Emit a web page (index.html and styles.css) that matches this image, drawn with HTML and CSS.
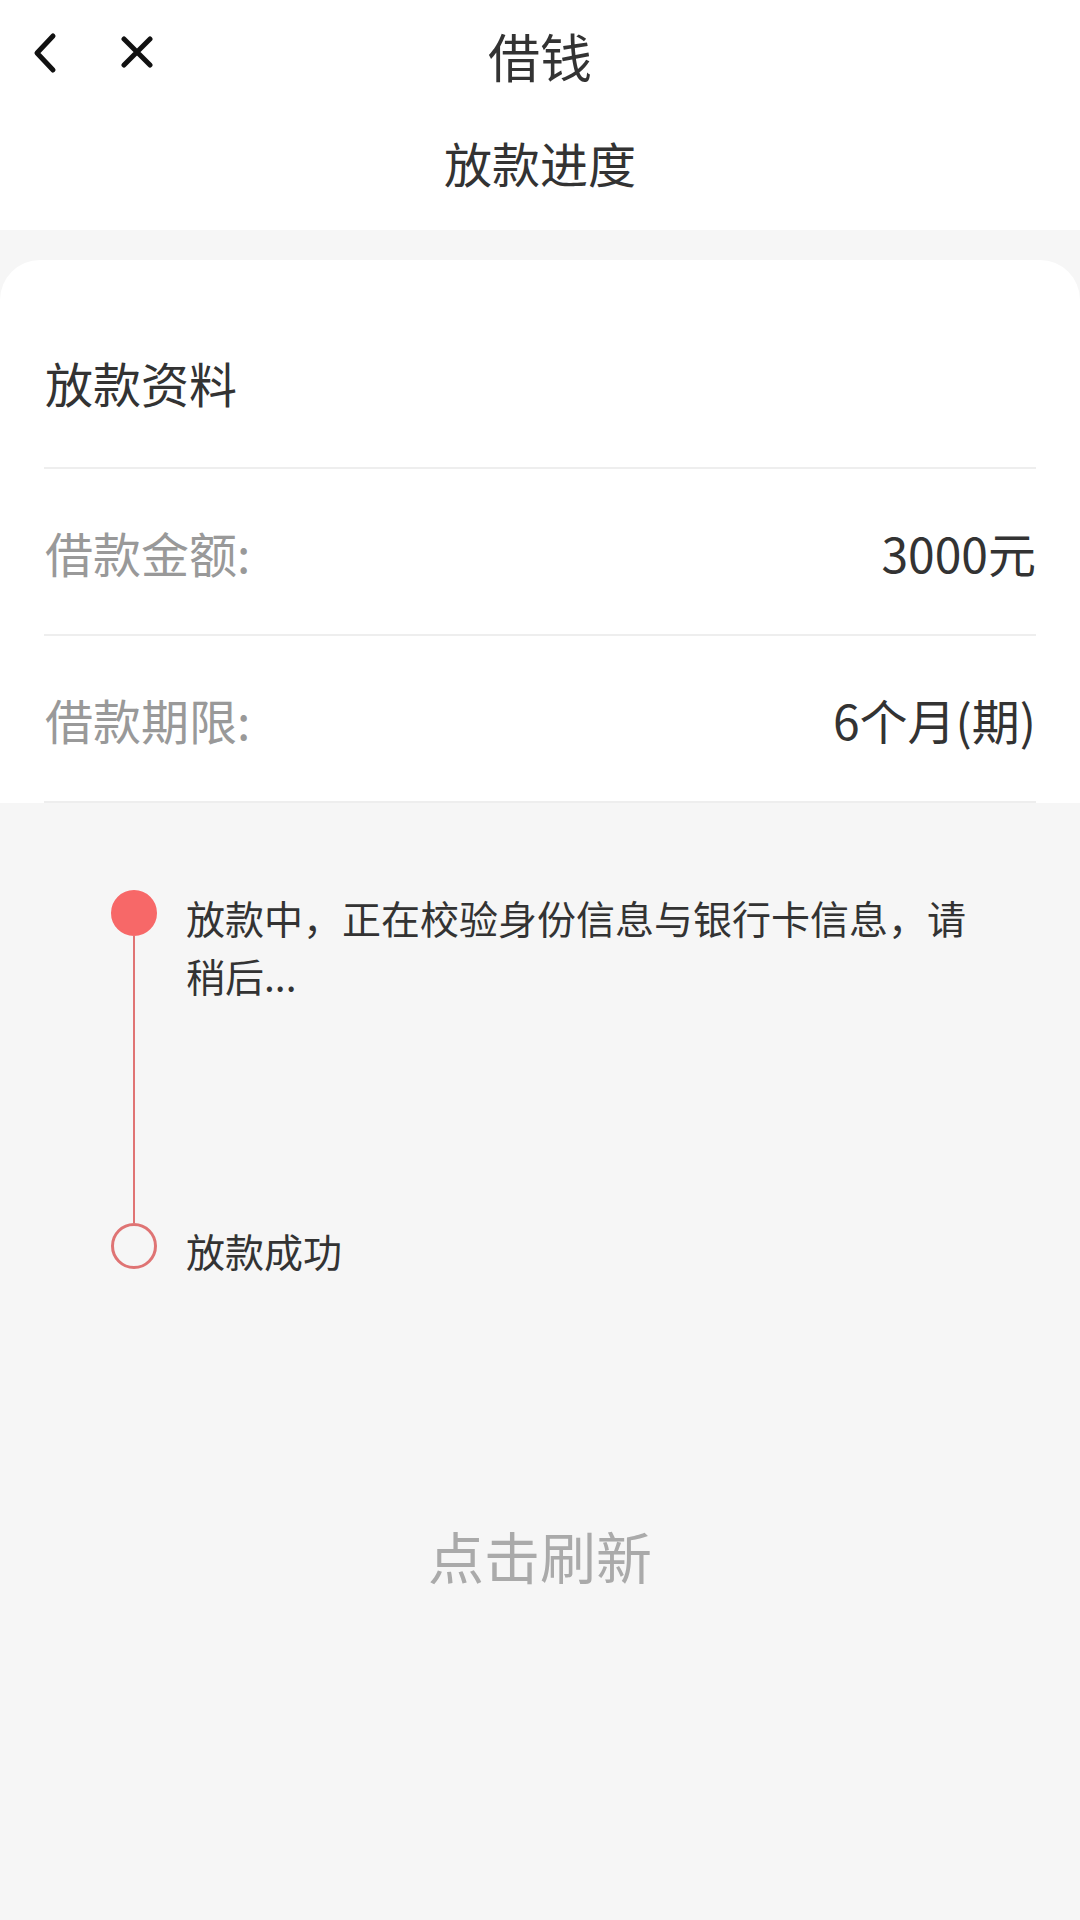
FILE: index.html
```html
<!DOCTYPE html>
<html lang="zh-CN">
<head>
    <meta charset="UTF-8">
    <meta name="viewport" content="width=device-width, initial-scale=1.0">
    <title>借钱 - 放款进度</title>
    <link rel="stylesheet" href="styles.css">
</head>
<body>
    <div class="header">
        <div class="nav">
            <div class="nav-left">
                <!-- 返回 -->
                <svg class="icon-back" width="24" height="46" viewBox="0 0 24 46">
                    <path d="M20 6 L4 23 L20 40" fill="none" stroke="#111" stroke-width="5" stroke-linecap="round" stroke-linejoin="round"/>
                </svg>
                <!-- 关闭 -->
                <svg class="icon-close" width="32" height="32" viewBox="0 0 32 32">
                    <path d="M3 3 L29 29 M29 3 L3 29" fill="none" stroke="#111" stroke-width="5" stroke-linecap="round"/>
                </svg>
            </div>
            <div class="nav-title">借钱</div>
            <div class="nav-right"></div>
        </div>
        <div class="subtitle">放款进度</div>
    </div>

    <div class="main">
        <div class="card">
            <div class="card-title">放款资料</div>
            <div class="row">
                <span class="label">借款金额:</span>
                <span class="value">3000元</span>
            </div>
            <div class="row">
                <span class="label">借款期限:</span>
                <span class="value">6个月(期)</span>
            </div>
        </div>

        <div class="timeline">
            <div class="step">
                <div class="step-mark">
                    <div class="dot active"></div>
                    <div class="line"></div>
                </div>
                <div class="step-text">放款中，正在校验身份信息与银行卡信息，请稍后...</div>
            </div>
            <div class="step">
                <div class="step-mark">
                    <div class="dot"></div>
                </div>
                <div class="step-text">放款成功</div>
            </div>
        </div>

        <div class="refresh">点击刷新</div>
    </div>
</body>
</html>
```

FILE: styles.css
```css
body {
    margin: 0;
    font-family: "Noto Sans CJK SC", "Noto Sans", sans-serif;
    background-color: #f6f6f6;
    color: #333;
    min-height: 1920px;
}
.header {
    background-color: #fff;
    padding-bottom: 18px;
}
.nav {
    display: grid;
    grid-template-columns: 1fr auto 1fr;
    height: 112px;
}
.nav-left {
    display: flex;
    align-items: flex-start;
    padding-left: 33px;
    gap: 64px;
}
.icon-back {
    margin-top: 30px;
}
.icon-close {
    margin-top: 36px;
}
.nav-title {
    font-size: 52px;
    line-height: 112px;
    color: #333;
}
.subtitle {
    text-align: center;
    font-size: 48px;
    line-height: 100px;
    color: #333;
}
.main {
    padding-top: 30px;
}
.card {
    background-color: #fff;
    border-radius: 40px 40px 0 0;
    padding: 0 44px;
}
.card-title {
    font-size: 48px;
    line-height: 66px;
    padding: 89px 0 52px 1px;
    border-bottom: 2px solid #eee;
    color: #333;
}
.row {
    display: flex;
    justify-content: space-between;
    align-items: center;
    height: 165px;
    padding-left: 1px;
    border-bottom: 2px solid #eee;
    font-size: 48px;
}
.label {
    color: #999;
}
.value {
    color: #333;
}
.timeline {
    padding: 87px 94px 0 111px;
}
.step {
    display: flex;
    gap: 29px;
}
.step:first-child {
    height: 333px;
}
.step-mark {
    display: flex;
    flex-direction: column;
    align-items: center;
    width: 46px;
    flex-shrink: 0;
}
.dot {
    width: 46px;
    height: 46px;
    box-sizing: border-box;
    border-radius: 50%;
    border: 3px solid #df7474;
}
.dot.active {
    background-color: #f76868;
    border-color: #f76868;
}
.line {
    flex: 1;
    width: 2px;
    background-color: #e07474;
}
.step-text {
    font-size: 39px;
    line-height: 58px;
    margin-top: -2px;
    color: #333;
}
.refresh {
    margin-top: 236px;
    text-align: center;
    font-size: 56px;
    line-height: 80px;
    color: #aaa;
}
```
